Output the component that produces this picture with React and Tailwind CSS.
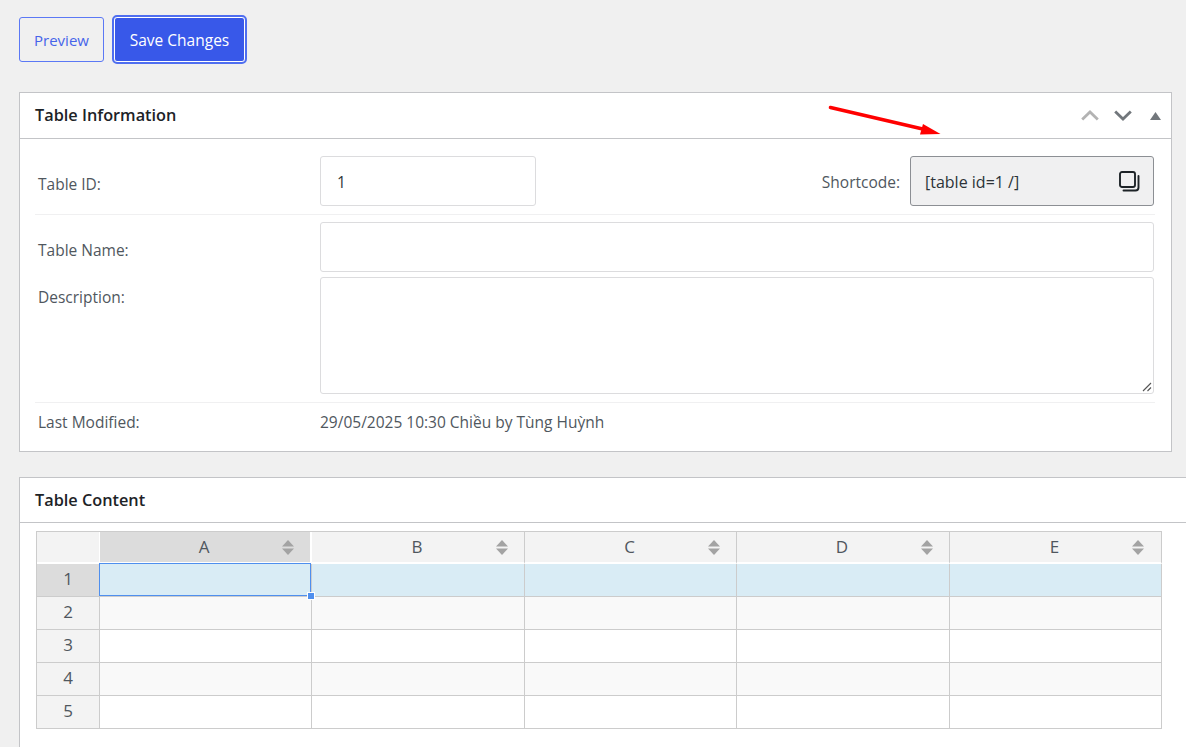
import React from "react";

const columns = ["A", "B", "C", "D", "E"];
const rows = [1, 2, 3, 4, 5];

const SortIcon = () => (
  <svg width="12" height="15" viewBox="0 0 12 15" className="fill-[#a3a3a3]">
    <path d="M6 0 12 6.5H0Z" />
    <path d="M0 8.5H12L6 15Z" />
  </svg>
);

const CopyIcon = () => (
  <svg width="21" height="21" viewBox="0 0 21 21" fill="none" stroke="#1d2327" strokeWidth="1.9">
    <rect x="1" y="1" width="15" height="15" rx="2" />
    <path d="M19.5 5v11.5a3 3 0 0 1-3 3H4.5" strokeLinecap="round" />
  </svg>
);

const Arrow = () => (
  <svg
    width="116"
    height="34"
    viewBox="0 0 116 34"
    className="absolute left-[827px] top-[103px]"
  >
    <path d="M3.5 4.5 100 27" stroke="#ff0000" strokeWidth="3.6" strokeLinecap="round" />
    <path d="M96 21 113.500 31 93 31.500Z" fill="#ff0000" />
  </svg>
);

const PanelControls = () => (
  <div className="flex items-center">
    <svg width="18" height="11" viewBox="0 0 18 11" fill="none" stroke="#b3b3b3" strokeWidth="2.8" className="mr-[15px]">
      <path d="M1.2 9.5 9 2l7.8 7.5" />
    </svg>
    <svg width="18" height="11" viewBox="0 0 18 11" fill="none" stroke="#72777c" strokeWidth="2.8" className="mr-[18px]">
      <path d="M1.2 1.5 9 9l7.8-7.5" />
    </svg>
    <svg width="11" height="8" viewBox="0 0 11 8" fill="#72777c">
      <path d="M5.5 0 11 8H0Z" />
    </svg>
  </div>
);

const App = () => {
  return (
    <div
      className="relative h-[747px] w-[1186px] overflow-hidden bg-[#f0f0f0] text-[15.5px] text-[#50575e]"
      style={{ fontFamily: '"Open Sans", "Noto Sans", sans-serif' }}
    >
      <div className="flex h-[92px] items-start pl-[19px] pt-[15px]">
        <button className="mt-[2px] h-[45px] w-[85px] rounded-[3px] border border-[#5b78f5] pt-[2px] text-[15px] text-[#4664ea]">
          Preview
        </button>
        <button className="ml-[10px] mt-[2px] h-[45px] w-[131px] rounded-[3px] border border-white bg-[#3858e9] pt-[3px] text-[15.5px] text-white outline-2 outline-[#4f6ef0]">
          Save Changes
        </button>
      </div>

      <section className="ml-[19px] h-[360px] w-[1153px] border border-[#c3c4c7] bg-white">
        <header className="flex h-[46px] items-center justify-between border-b border-[#c3c4c7] pl-[15px] pr-[10px]">
          <h2 className="text-[16.3px] font-semibold text-[#1d2327]">Table Information</h2>
          <PanelControls />
        </header>

        <div className="pl-[15px] pr-[16px]">
          <div className="flex h-[76px] items-start border-b border-[#f0f0f1] pt-[17px]">
            <label className="mt-[18px] w-[285px] pl-[3px] leading-[20px]">Table ID:</label>
            <div className="flex h-[50px] w-[216px] items-center rounded-[3px] border border-[#dcdcde] pl-[16px] pt-[4px] text-[#2c3338]">
              1
            </div>
            <label className="ml-auto mr-[10px] mt-[16px] leading-[20px]">Shortcode:</label>
            <div className="mr-[1px] flex h-[50px] w-[244px] items-center justify-between rounded-[3px] border border-[#8c8f94] bg-[#f0f0f1] pl-[14px] pr-[13px] text-[16px] text-[#2c3338]">
              <span className="pt-[2px]">[table id=1 /]</span>
              <CopyIcon />
            </div>
          </div>

          <div className="flex h-[188px] items-start border-b border-[#f0f0f1] pt-[7px]">
            <div className="w-[285px] pl-[3px] leading-[20px]">
              <div className="mt-[18px]">Table Name:</div>
              <div className="mt-[27px]">Description:</div>
            </div>
            <div className="flex w-[834px] flex-col gap-[5px]">
              <div className="h-[50px] rounded-[3px] border border-[#dcdcde]" />
              <div className="relative h-[117px] rounded-[3px] border border-[#dcdcde]">
                <svg width="10" height="10" viewBox="0 0 10 10" stroke="#555" strokeWidth="1.1" className="absolute bottom-[1px] right-[1px]">
                  <path d="M1 9 9 1M5.5 9 9 5.5" />
                </svg>
              </div>
            </div>
          </div>

          <div className="flex h-[41px] items-center pb-[2px]">
            <div className="w-[285px] pl-[3px]">Last Modified:</div>
            <div>29/05/2025 10:30 Chiều by Tùng Huỳnh</div>
          </div>
        </div>
      </section>

      <section className="ml-[19px] mt-[25px] h-[280px] w-[1180px] border border-[#c3c4c7] bg-white">
        <header className="flex h-[45px] items-center border-b border-[#c3c4c7] pl-[15px]">
          <h2 className="text-[16.3px] font-semibold text-[#1d2327]">Table Content</h2>
        </header>

        <div className="ml-[16px] mt-[8px] grid w-[1126px] grid-cols-[63px_212px_213px_212px_213px_212px] grid-rows-[32px_repeat(5,33px)] border-l border-t border-[#cccccc] text-[17px]">
          <div className="border-b-2 border-r border-white bg-[#f3f3f3]" />
          {columns.map((col, i) => (
            <div
              key={col}
              className={
                i === 0
                  ? "relative flex items-center justify-center border-b-2 border-r-2 border-white bg-[#dcdcdc] pr-[2px]"
                  : "relative flex items-center justify-center border-b-2 border-r border-[#cccccc] border-b-white bg-[#f3f3f3] pr-[2px]"
              }
            >
              <span className="text-[#50575e]">{col}</span>
              <span className={i === 4 ? "absolute right-[17px] flex" : "absolute right-[16px] flex"}>
                <SortIcon />
              </span>
            </div>
          ))}

          {rows.map((row) => (
            <React.Fragment key={row}>
              <div
                className={
                  row === 1
                    ? "flex items-center justify-center border-b border-r border-[#cccccc] bg-[#dcdcdc] pb-[3px] text-[#50575e]"
                    : "flex items-center justify-center border-b border-r border-[#cccccc] bg-[#f3f3f3] pb-[3px] text-[#50575e]"
                }
              >
                {row}
              </div>
              {columns.map((col, i) => (
                <div
                  key={col}
                  className={
                    row === 1
                      ? "relative border-b border-r border-[#cccccc] bg-[#d9ecf5]"
                      : row % 2 === 0
                        ? "border-b border-r border-[#cccccc] bg-[#f9f9f9]"
                        : "border-b border-r border-[#cccccc] bg-white"
                  }
                >
                  {row === 1 && i === 0 && (
                    <>
                      <div className="absolute -left-[1px] -top-[1px] bottom-0 right-0 border border-[#4f8fee]" />
                      <div className="absolute -bottom-[4px] -right-[4px] z-10 h-[8px] w-[8px] border border-white bg-[#4f8fee]" />
                    </>
                  )}
                </div>
              ))}
            </React.Fragment>
          ))}
        </div>
      </section>

      <Arrow />
    </div>
  );
};

export default App;
